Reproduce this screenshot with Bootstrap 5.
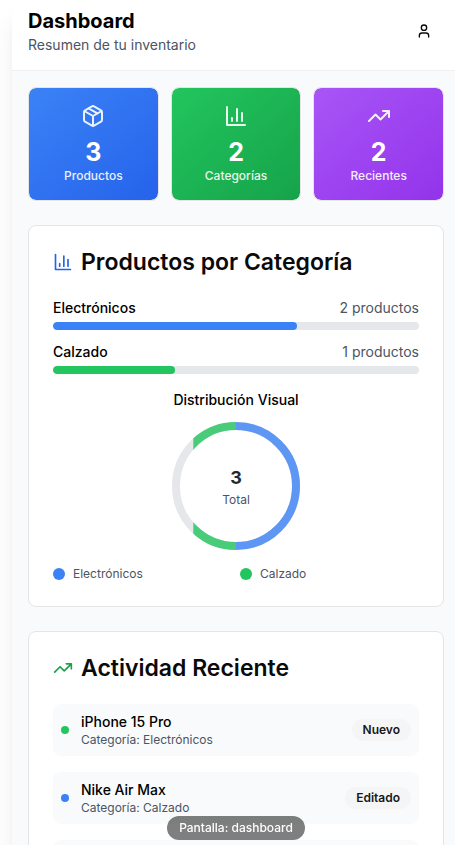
<!DOCTYPE html>
<html lang="es">
<head>
<meta charset="utf-8">
<meta name="viewport" content="width=device-width, initial-scale=1">
<title>Dashboard</title>
<link href="https://cdn.jsdelivr.net/npm/bootstrap@5.3.0/dist/css/bootstrap.min.css" rel="stylesheet">
<style>
  body { font-family: Inter, "Liberation Sans", sans-serif; font-size: 14px; line-height: 20px; color: #000; background: #fff; }
  .app-shell { margin-left: 12px; min-height: 100vh; background: #f9fafb; box-shadow: 0 20px 25px -5px rgba(0,0,0,.1), 0 8px 10px -6px rgba(0,0,0,.1); }
  .gutter { padding-left: 16px; padding-right: 11px; }
  .app-header { padding-top: 7px; padding-bottom: 15px; border-bottom: 1px solid #eef0f2; }
  .app-title { font-size: 20px; line-height: 28px; font-weight: 700; }
  .muted { color: #4b5563; }
  .user-btn { width: 40px; height: 36px; --bs-btn-hover-bg: #f3f4f6; }
  .stat-grid { gap: 12px; }
  .stat-card { flex: 1 1 0; min-width: 0; color: #fff; border: 1px solid #e5e5e5; border-radius: 8px; background-clip: padding-box; }
  .stat-blue { background-image: linear-gradient(to bottom right, #3b82f6, #2563eb); }
  .stat-green { background-image: linear-gradient(to bottom right, #22c55e, #16a34a); }
  .stat-purple { background-image: linear-gradient(to bottom right, #a855f7, #9333ea); }
  .stat-value { font-size: 25px; line-height: 32px; font-weight: 700; }
  .tiny { font-size: 12px; line-height: 16px; }
  .soft { opacity: .9; }
  .panel { border: 1px solid #e5e5e5; border-radius: 8px; }
  .panel-title { font-size: 23px; line-height: 24px; font-weight: 600; color: #0a0a0a; gap: 8px; }
  .sub-title { font-size: 14px; line-height: 20px; font-weight: 500; }
  .stack-12 { gap: 12px; }
  .bar { height: 8px; border-radius: 8px; background: #e5e7eb; }
  .bar .progress-bar { border-radius: 8px; }
  .fill-blue { background: #3b82f6; }
  .fill-green { background: #22c55e; }
  .donut { width: 128px; height: 128px; }
  .donut-total { font-size: 18px; line-height: 28px; color: #1f2937; }
  .key-dot { width: 12px; height: 12px; }
  .state-dot { width: 8px; height: 8px; }
  .activity { background: #f9fafb; border-radius: 8px; gap: 12px; min-height: 52px; }
  .tag { padding: 3px 11px; font-size: 12px; line-height: 16px; font-weight: 600; color: #171717; background: #f5f5f5; }
  .screen-note { padding-bottom: 5px; margin-left: 12px; pointer-events: none; }
  .screen-note span { padding: 4px 12px; color: #fff; background: rgba(0,0,0,.5); }
</style>
<script src="https://cdn.jsdelivr.net/npm/bootstrap@5.3.0/dist/js/bootstrap.bundle.min.js"></script>
</head>
<body>
<svg class="d-none" aria-hidden="true">
  <symbol id="i-chart" viewBox="0 0 24 24"><path d="M3 3v18h18M18 17V9M13 17V5M8 17v-3"/></symbol>
  <symbol id="i-trend" viewBox="0 0 24 24"><path d="M22 7l-8.500 8.500-5-5L2 17M16 7h6v6"/></symbol>
</svg>
<div class="app-shell">
  <header class="app-header gutter bg-white d-flex justify-content-between align-items-center">
    <div>
      <h1 class="app-title m-0">Dashboard</h1>
      <p class="muted m-0">Resumen de tu inventario</p>
    </div>
    <button type="button" class="btn user-btn p-0 border-0 d-flex align-items-center justify-content-center" aria-label="Perfil">
      <svg width="16" height="16" viewBox="0 0 24 24" fill="none" stroke="#0a0a0a" stroke-width="2" stroke-linecap="round" stroke-linejoin="round"><path d="M19 21v-2a4 4 0 0 0-4-4H9a4 4 0 0 0-4 4v2"/><circle cx="12" cy="7" r="4"/></svg>
    </button>
  </header>

  <main class="gutter pt-3 pb-5 d-flex flex-column gap-4">
    <section class="stat-grid d-flex">
      <div class="stat-card stat-blue p-3 text-center">
        <svg class="d-block mx-auto mb-2 soft" width="24" height="24" viewBox="0 0 24 24" fill="none" stroke="currentColor" stroke-width="2" stroke-linecap="round" stroke-linejoin="round"><path d="M11 21.730a2 2 0 0 0 2 0l7-4A2 2 0 0 0 21 16V8a2 2 0 0 0-1-1.730l-7-4a2 2 0 0 0-2 0l-7 4A2 2 0 0 0 3 8v8a2 2 0 0 0 1 1.730zM12 22V12M3.300 7 12 12l8.700-5M7.500 4.270l9 5.150"/></svg>
        <div class="stat-value">3</div>
        <div class="tiny soft fw-medium">Productos</div>
      </div>
      <div class="stat-card stat-green p-3 text-center">
        <svg class="d-block mx-auto mb-2 soft" width="24" height="24" fill="none" stroke="currentColor" stroke-width="2" stroke-linecap="round" stroke-linejoin="round"><use href="#i-chart"/></svg>
        <div class="stat-value">2</div>
        <div class="tiny soft fw-medium">Categorías</div>
      </div>
      <div class="stat-card stat-purple p-3 text-center">
        <svg class="d-block mx-auto mb-2 soft" width="24" height="24" fill="none" stroke="currentColor" stroke-width="2" stroke-linecap="round" stroke-linejoin="round"><use href="#i-trend"/></svg>
        <div class="stat-value">2</div>
        <div class="tiny soft fw-medium">Recientes</div>
      </div>
    </section>

    <section class="panel bg-white p-4">
      <h2 class="panel-title d-flex align-items-center mb-4">
        <svg class="flex-shrink-0" width="20" height="20" fill="none" stroke="#2563eb" stroke-width="2" stroke-linecap="round" stroke-linejoin="round"><use href="#i-chart"/></svg>
        Productos por Categoría
      </h2>
      <div class="d-flex flex-column stack-12 mb-3">
        <div>
          <div class="d-flex justify-content-between mb-1"><span class="fw-medium" id="lbl-e">Electrónicos</span><span class="muted">2 productos</span></div>
          <div class="progress bar" role="progressbar" aria-labelledby="lbl-e" aria-valuenow="2" aria-valuemin="0" aria-valuemax="3"><div class="progress-bar fill-blue" style="width:66.67%"></div></div>
        </div>
        <div>
          <div class="d-flex justify-content-between mb-1"><span class="fw-medium" id="lbl-c">Calzado</span><span class="muted">1 productos</span></div>
          <div class="progress bar" role="progressbar" aria-labelledby="lbl-c" aria-valuenow="1" aria-valuemin="0" aria-valuemax="3"><div class="progress-bar fill-green" style="width:33.33%"></div></div>
        </div>
      </div>
      <div class="d-flex flex-column stack-12 align-items-center mb-3">
        <h3 class="sub-title m-0">Distribución Visual</h3>
        <div class="donut position-relative">
          <svg class="d-block w-100 h-100" viewBox="0 0 128 128" fill="none" stroke-width="8">
            <clipPath id="half-r"><rect x="64" y="0" width="64" height="128"/></clipPath>
            <clipPath id="part-l"><rect x="21.300" y="0" width="42.700" height="128"/></clipPath>
            <circle cx="64" cy="64" r="60" stroke="#e5e7eb"/>
            <circle cx="64" cy="64" r="60" stroke="#5e97f3" clip-path="url(#half-r)"/>
            <circle cx="64" cy="64" r="60" stroke="#49cc79" clip-path="url(#part-l)"/>
          </svg>
          <div class="position-absolute top-0 start-0 w-100 h-100 d-flex flex-column align-items-center justify-content-center">
            <div class="donut-total fw-bold">3</div>
            <div class="tiny muted">Total</div>
          </div>
        </div>
      </div>
      <div class="row row-cols-2 gx-2 tiny muted">
        <div class="col d-flex align-items-center gap-2"><span class="key-dot rounded-circle fill-blue"></span>Electrónicos</div>
        <div class="col d-flex align-items-center gap-2"><span class="key-dot rounded-circle fill-green"></span>Calzado</div>
      </div>
    </section>

    <section class="panel bg-white p-4">
      <h2 class="panel-title d-flex align-items-center mb-4">
        <svg class="flex-shrink-0" width="20" height="20" fill="none" stroke="#16a34a" stroke-width="2" stroke-linecap="round" stroke-linejoin="round"><use href="#i-trend"/></svg>
        Actividad Reciente
      </h2>
      <div class="d-flex flex-column gap-3">
        <div class="activity d-flex align-items-center p-2">
          <span class="state-dot rounded-circle fill-green"></span>
          <div class="flex-grow-1"><div class="fw-medium">iPhone 15 Pro</div><div class="tiny muted">Categoría: Electrónicos</div></div>
          <span class="tag rounded-pill">Nuevo</span>
        </div>
        <div class="activity d-flex align-items-center p-2">
          <span class="state-dot rounded-circle fill-blue"></span>
          <div class="flex-grow-1"><div class="fw-medium">Nike Air Max</div><div class="tiny muted">Categoría: Calzado</div></div>
          <span class="tag rounded-pill">Editado</span>
        </div>
        <div class="activity"></div>
      </div>
    </section>
  </main>
</div>
<div class="screen-note gutter fixed-bottom d-flex justify-content-center"><span class="tiny rounded-pill fw-medium">Pantalla: dashboard</span></div>
</body>
</html>
